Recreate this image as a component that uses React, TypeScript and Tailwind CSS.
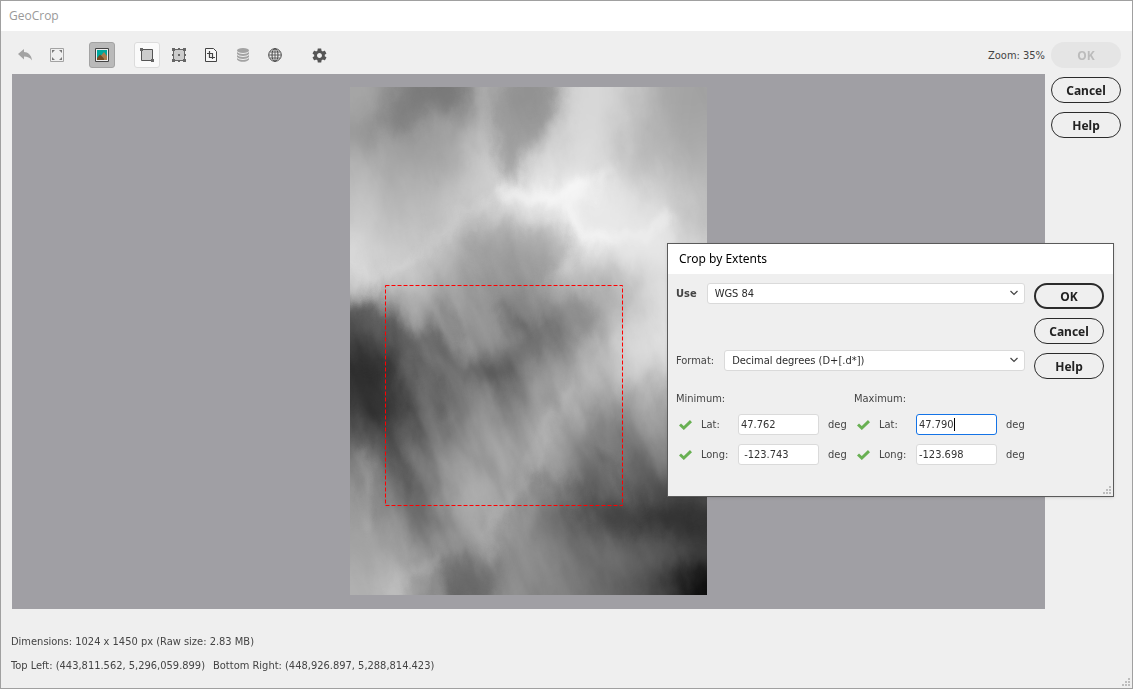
import { type ReactNode } from 'react'
import { IoMdSettings } from 'react-icons/io'

// gray level of every 30px cell of the height map
const heights = [
  [165, 140, 130, 128, 175, 160, 160, 215, 215, 195, 168, 163],
  [150, 150, 155, 165, 190, 178, 190, 217, 215, 190, 172, 168],
  [175, 165, 165, 175, 205, 190, 215, 225, 215, 192, 182, 178],
  [190, 178, 180, 190, 205, 230, 234, 242, 228, 222, 205, 188],
  [200, 190, 190, 198, 190, 208, 220, 230, 234, 230, 226, 190],
  [214, 202, 200, 175, 165, 160, 175, 214, 228, 232, 230, 215],
  [207, 202, 188, 165, 152, 142, 165, 188, 178, 202, 222, 225],
  [95, 145, 165, 160, 148, 132, 150, 142, 165, 202, 224, 225],
  [66, 88, 120, 145, 158, 122, 112, 142, 185, 215, 226, 225],
  [45, 60, 112, 118, 104, 110, 145, 170, 195, 202, 214, 210],
  [55, 56, 105, 118, 125, 130, 150, 180, 155, 165, 175, 180],
  [82, 72, 112, 138, 152, 155, 172, 148, 122, 138, 150, 155],
  [128, 92, 122, 150, 160, 170, 155, 138, 112, 112, 125, 130],
  [146, 110, 118, 158, 172, 165, 136, 108, 105, 92, 78, 75],
  [155, 142, 110, 150, 168, 145, 120, 105, 76, 68, 50, 48],
  [162, 162, 142, 150, 160, 138, 132, 120, 110, 100, 92, 64],
  [176, 186, 155, 108, 116, 142, 135, 120, 105, 88, 62, 14]
]

const cells = Array.from({ length: 19 * 14 }, (_, i) => {
  const row = Math.floor(i / 14) - 1
  const col = (i % 14) - 1
  const value = heights[Math.min(16, Math.max(0, row))][Math.min(11, Math.max(0, col))]
  return { x: col * 30, y: row * 30, fill: `rgb(${value},${value},${value})` }
})

const Terrain = () => (
  <svg
    className="block h-[508px] w-[357px]"
    viewBox="0 0 357 508"
    role="img"
    aria-label="Height map"
  >
    <defs>
      <filter id="base" filterUnits="userSpaceOnUse" x="-40" y="-40" width="440" height="590" colorInterpolationFilters="sRGB">
        <feGaussianBlur stdDeviation="12" />
      </filter>
      <filter id="soft" filterUnits="userSpaceOnUse" x="-40" y="-40" width="440" height="590" colorInterpolationFilters="sRGB">
        <feGaussianBlur stdDeviation="7" />
      </filter>
      <filter id="fine" filterUnits="userSpaceOnUse" x="-40" y="-40" width="440" height="590" colorInterpolationFilters="sRGB">
        <feGaussianBlur stdDeviation="4" />
      </filter>
      <filter id="rough" filterUnits="userSpaceOnUse" x="-30" y="-30" width="420" height="570" colorInterpolationFilters="sRGB">
        <feTurbulence type="fractalNoise" baseFrequency="0.04 0.022" numOctaves="4" seed="12" result="noise" />
        <feDisplacementMap in="SourceGraphic" in2="noise" scale="24" xChannelSelector="R" yChannelSelector="G" />
      </filter>
      <filter id="ridges" filterUnits="userSpaceOnUse" x="-300" y="-300" width="960" height="1100" colorInterpolationFilters="sRGB">
        <feTurbulence type="fractalNoise" baseFrequency="0.04 0.012" numOctaves="3" seed="4" />
        <feColorMatrix values="1.800 0 0 0 -0.400  1.800 0 0 0 -0.400  1.800 0 0 0 -0.400  0 0 0 0 1" />
      </filter>
      <radialGradient id="lower" gradientUnits="userSpaceOnUse" cx="150" cy="340" r="230">
        <stop offset="0" stopColor="#fff" />
        <stop offset=".6" stopColor="#bbb" />
        <stop offset="1" stopColor="#222" />
      </radialGradient>
      <mask id="slopes" maskUnits="userSpaceOnUse" x="0" y="0" width="357" height="508">
        <path d="M0 0h357v508H0z" fill="url(#lower)" />
      </mask>
    </defs>
    <g filter="url(#rough)">
      <g filter="url(#base)">
        {cells.map(({ x, y, fill }) => (
          <rect key={`${x} ${y}`} x={x} y={y} width="31" height="31" fill={fill} />
        ))}
      </g>
      <g filter="url(#soft)">
        <path d="M28 36 L60 -6 L125 -14 L95 20 L60 38 L34 50Z" fill="#6e6e6e" opacity=".4" />
        <path d="M154 -14 L214 -14 L190 36 L174 74 L164 90 L150 86 L146 30Z" fill="#8e8e8e" opacity=".65" />
        <path d="M150 106 L200 106 L240 98 L222 122 L234 150 L262 152" fill="none" stroke="#fff" strokeWidth="12" opacity=".5" />
        <path d="M115 150 L140 132 L170 140 L206 138 L222 160 L200 190 L150 200 L120 180Z" fill="#999" opacity=".3" />
        <path d="M-10 226 L20 228 L50 244 L90 258 L116 286 L150 294" fill="none" stroke="#404040" strokeWidth="14" opacity=".35" />
        <path d="M-10 280 L38 276 L42 330 L20 334 L-10 330Z" fill="#303030" opacity=".3" />
        <path d="M110 286 L146 296 L170 262 L206 240" fill="none" stroke="#505050" strokeWidth="14" opacity=".3" />
        <path d="M196 217 L232 214 L240 236 L205 252Z" fill="#888" opacity=".5" />
        <path d="M222 420 L290 432 L360 440" fill="none" stroke="#303030" strokeWidth="14" opacity=".35" />
        <path d="M94 468 L146 464 L142 500 L126 520 L96 520Z" fill="#555" opacity=".4" />
      </g>
      <g filter="url(#fine)" fill="none" strokeLinecap="round">
        <path d="M-5 165 L18 194 L45 182 L74 168 L84 150 L110 134 L128 122 L150 106" stroke="#eee" strokeWidth="8" opacity=".22" />
        <path d="M190 108 L216 118 L230 146 L262 152 L294 150 L320 128" stroke="#fff" strokeWidth="7" opacity=".38" />
        <path d="M150 106 L190 108 L236 98 L266 80" stroke="#fff" strokeWidth="8" opacity=".25" />
        <path d="M202 190 L216 178 L226 150" stroke="#ddd" strokeWidth="6" opacity=".4" />
        <path d="M220 300 L206 326 L186 364 L172 398 L150 424 L138 450" stroke="#ccc" strokeWidth="10" opacity=".25" />
        <path d="M252 364 L268 388 L282 412 L300 428" stroke="#333" strokeWidth="5" opacity=".4" />
        <path d="M188 390 L210 402 L236 410" stroke="#444" strokeWidth="5" opacity=".35" />
        <path d="M66 270 L82 296 L96 330" stroke="#444" strokeWidth="5" opacity=".3" />
        <path d="M38 350 L50 374 L60 402" stroke="#333" strokeWidth="6" opacity=".3" />
        <path d="M90 216 L100 234 L106 250" stroke="#555" strokeWidth="5" opacity=".35" />
        <path d="M150 216 L160 234 L176 242" stroke="#444" strokeWidth="6" opacity=".3" />
        <path d="M16 360 L12 400 L16 440" stroke="#ccc" strokeWidth="7" opacity=".25" />
        <path d="M40 508 L56 492 L70 484 L90 478" stroke="#ddd" strokeWidth="7" opacity=".25" />
      </g>
    </g>
    <g mask="url(#slopes)" className="mix-blend-soft-light">
      <path d="M-300 -300h960v1100h-960z" filter="url(#ridges)" opacity=".22" transform="rotate(-22 178 254)" />
    </g>
    <path d="M35.5 198.5H272.5V418.5H35.5Z" fill="none" stroke="#f00" strokeDasharray="4 2" />
  </svg>
)

const Grip = ({ className }: { className: string }) => (
  <svg className={className} width="9" height="9" viewBox="0 0 9 9" fill="#bdbdbd" aria-hidden="true">
    <path d="M6 0h2v2h-2zM3 3h2v2h-2zM6 3h2v2h-2zM0 6h2v2h-2zM3 6h2v2h-2zM6 6h2v2h-2z" />
  </svg>
)

const PillButton = ({ children, variant = 'normal' }: { children: ReactNode; variant?: 'normal' | 'default' | 'disabled' }) => {
  const styles = {
    normal: 'border border-[#2b2b2b] text-[#222]',
    default: 'border-2 border-[#2b2b2b] text-[#222]',
    disabled: 'bg-[#e5e5e5] text-[#bcbcbc]'
  }
  return (
    <button
      type="button"
      disabled={variant === 'disabled'}
      className={`flex h-[26px] w-[70px] items-center justify-center rounded-full pt-px font-['Noto_Sans',sans-serif] text-[12px] font-bold ${styles[variant]}`}
    >
      {children}
    </button>
  )
}

const ToolButton = ({ label, className = '', children }: { label: string; className?: string; children: ReactNode }) => (
  <button
    type="button"
    aria-label={label}
    className={`flex size-[26px] items-center justify-center rounded-[3px] ${className}`}
  >
    {children}
  </button>
)

const Toolbar = () => (
  <div className="flex h-[26px] items-center gap-[6px]">
    <ToolButton label="Undo">
      <svg width="14" height="12" viewBox="0 0 14 12" fill="#a3a3a3">
        <path d="M0 5L6 0V3C10 3 13.500 6 14 11.500C12 8.500 9.500 7.500 6 7.500V10.500Z" />
      </svg>
    </ToolButton>
    <ToolButton label="Fit to window">
      <svg width="14" height="14" viewBox="0 0 14 14" fill="none" stroke="#a3a3a3">
        <path d="M.5 .5h13v13h-13z" />
        <path d="M2 2h3L2 5zM12 2v3L9 2zM12 12h-3L12 9zM2 12v-3L5 12z" fill="#777" stroke="none" />
      </svg>
    </ToolButton>
    <ToolButton label="Show preview" className="ml-[13px] border border-[#a3a3a3] bg-[#bababa]">
      <svg width="14" height="14" viewBox="0 0 14 14">
        <path d="M.5 .5h13v13h-13z" fill="#eee" stroke="#444" />
        <path d="M2 2h10v10h-10z" fill="#00a79d" />
        <path d="M6 12V7.500L9 4L12 8V12Z" fill="#a87c4f" />
        <path d="M2 12V10L5 6.500L9 10.500V12Z" fill="#754c24" />
      </svg>
    </ToolButton>
    <ToolButton label="Crop by rectangle" className="ml-[13px] border border-[#dcdcdc] bg-[#fafafa]">
      <svg width="14" height="14" viewBox="0 0 14 14">
        <path d="M1.500 1.500h11v11h-11z" fill="#ccc" stroke="#555" />
        <path d="M0 0h3v3h-3zM11 11h3v3h-3z" fill="#666" />
      </svg>
    </ToolButton>
    <ToolButton label="Crop by center">
      <svg width="14" height="14" viewBox="0 0 14 14">
        <path d="M1.500 1.500h11v11h-11z" fill="#ccc" stroke="#666" />
        <path d="M0 0h3v3h-3zM11 0h3v3h-3zM0 11h3v3h-3zM11 11h3v3h-3zM6 0h2v2h-2zM6 12h2v2h-2zM0 6h2v2h-2zM12 6h2v2h-2zM6 6h2v2h-2z" fill="#666" />
      </svg>
    </ToolButton>
    <ToolButton label="Crop by extents">
      <svg width="12" height="14" viewBox="0 0 12 14" fill="none" stroke="#444">
        <path d="M.5 .5h8l3 3v10h-11z" fill="#f7f7f7" />
        <path d="M4.500 3v6.500h5.500M2 5.500h5.500v5.500" strokeWidth="1.200" />
      </svg>
    </ToolButton>
    <ToolButton label="Crop to layer">
      <svg width="12" height="14" viewBox="0 0 12 14" fill="#a3a3a3">
        <ellipse cx="6" cy="2.500" rx="6" ry="2.500" />
        <path d="M0 4C2 6.500 10 6.500 12 4V6C10 8.500 2 8.500 0 6ZM0 7C2 9.500 10 9.500 12 7V9C10 11.500 2 11.500 0 9ZM0 10C2 12.500 10 12.500 12 10V11.500C10 14.600 2 14.600 0 11.500Z" />
      </svg>
    </ToolButton>
    <ToolButton label="Web service">
      <svg width="14" height="14" viewBox="0 0 14 14" fill="none" stroke="#444">
        <circle cx="7" cy="7" r="6.300" />
        <ellipse cx="7" cy="7" rx="3" ry="6.300" />
        <path d="M1 7h12M7 1v12M2 4h10M2 10h10" strokeWidth=".8" />
      </svg>
    </ToolButton>
    <ToolButton label="Settings" className="ml-[12px]">
      <IoMdSettings size={17} color="#555" />
    </ToolButton>
    <span className="ml-auto pt-[2px] leading-4">Zoom: 35%</span>
  </div>
)

const Select = ({ id, value }: { id: string; value: string }) => (
  <div className="relative flex-1">
    <select
      id={id}
      defaultValue={value}
      className="block h-[21px] w-full appearance-none rounded-[3px] border border-[#dadada] bg-white px-[7px] text-[11px] leading-4 text-[#2b2b2b]"
    >
      <option>{value}</option>
    </select>
    <svg className="pointer-events-none absolute right-[7px] top-[7px]" width="8" height="6" viewBox="0 0 8 6" fill="none" stroke="#444" strokeWidth="1.200" aria-hidden="true">
      <path d="M.5 1L4 4.500L7.500 1" />
    </svg>
  </div>
)

const Check = () => (
  <svg className="ml-[3px]" width="13" height="10" viewBox="0 0 13 10" fill="none" stroke="#68b052" strokeWidth="3" aria-hidden="true">
    <path d="M1 4.500L4.800 8L12 1.200" />
  </svg>
)

interface CoordinateProps {
  id: string
  label: string
  value: string
  focused?: boolean
}
const Coordinate = ({ id, label, value, focused }: CoordinateProps) => (
  <div className="grid grid-cols-[16px_28px_81px_17px] items-center gap-x-[9px]">
    <Check />
    <label htmlFor={id}>{label}</label>
    <div className="relative">
      <input
        id={id}
        defaultValue={value}
        className={`block h-[21px] w-full rounded-[3px] border bg-white px-[2px] leading-4 text-[#333] outline-none ${focused ? 'border-[#1473e6]' : 'border-[#dadada]'}`}
      />
      {focused && <span className="absolute left-[38px] top-[4px] h-[13px] w-px bg-black" />}
    </div>
    <span>deg</span>
  </div>
)

const CropDialog = () => (
  <section
    role="dialog"
    aria-labelledby="dialog-title"
    className="absolute left-[666px] top-[242px] w-[447px] border border-[#5a5a5a] bg-[#efefef] shadow-sm"
  >
    <h2 id="dialog-title" className="flex h-[30px] items-center bg-white px-[11px] font-['Noto_Sans',sans-serif] text-[12px] text-black">
      Crop by Extents
    </h2>
    <div className="flex gap-[9px] pb-[31px] pl-2 pr-[9px] pt-[9px]">
      <div className="flex-1">
        <div className="flex items-center gap-[10px]">
          <label htmlFor="datum" className="font-bold">
            Use
          </label>
          <Select id="datum" value="WGS 84" />
        </div>
        <div className="mt-[46px] flex items-center gap-[10px]">
          <label htmlFor="format">Format:</label>
          <Select id="format" value="Decimal degrees (D+[.d*])" />
        </div>
        <div className="mt-5 flex gap-[9px]">
          <fieldset className="flex flex-col gap-[9px]">
            <legend className="mb-[7px] leading-4">Minimum:</legend>
            <Coordinate id="min-lat" label="Lat:" value="47.762" />
            <Coordinate id="min-long" label="Long:" value=" -123.743" />
          </fieldset>
          <fieldset className="flex flex-col gap-[9px]">
            <legend className="mb-[7px] leading-4">Maximum:</legend>
            <Coordinate id="max-lat" label="Lat:" value="47.790" focused />
            <Coordinate id="max-long" label="Long:" value="-123.698" />
          </fieldset>
        </div>
      </div>
      <div className="flex flex-col gap-[9px]">
        <PillButton variant="default">OK</PillButton>
        <PillButton>Cancel</PillButton>
        <PillButton>Help</PillButton>
      </div>
    </div>
    <Grip className="absolute bottom-[1px] right-[1px]" />
  </section>
)

const App = () => {
  return (
    <div className="relative flex min-h-screen flex-col border border-[#a0a0a0] bg-[#efefef] font-['DejaVu_Sans_Condensed','DejaVu_Sans',sans-serif] text-[11px] leading-4 text-[#444]">
      <h1 className="flex h-[30px] items-center bg-white px-2 font-['Open_Sans',sans-serif] text-[12px] text-[#999]">GeoCrop</h1>
      <div className="flex flex-1 gap-[6px] px-[11px] pt-[11px]">
        <main className="flex flex-1 flex-col gap-[6px]">
          <Toolbar />
          <div className="flex flex-1 items-start justify-center bg-[#a09fa4] pb-[14px] pt-[13px]">
            <Terrain />
          </div>
        </main>
        <div className="flex flex-col gap-[9px]">
          <PillButton variant="disabled">OK</PillButton>
          <PillButton>Cancel</PillButton>
          <PillButton>Help</PillButton>
        </div>
      </div>
      <footer className="flex flex-col gap-2 px-[10px] pb-[14px] pt-[25px]">
        <p>Dimensions: 1024 x 1450 px (Raw size: 2.83 MB)</p>
        <p className="flex gap-2">
          <span>Top Left: (443,811.562, 5,296,059.899)</span>
          <span>Bottom Right: (448,926.897, 5,288,814.423)</span>
        </p>
      </footer>
      <CropDialog />
      <Grip className="absolute bottom-[1px] right-[1px]" />
    </div>
  )
}

export default App
